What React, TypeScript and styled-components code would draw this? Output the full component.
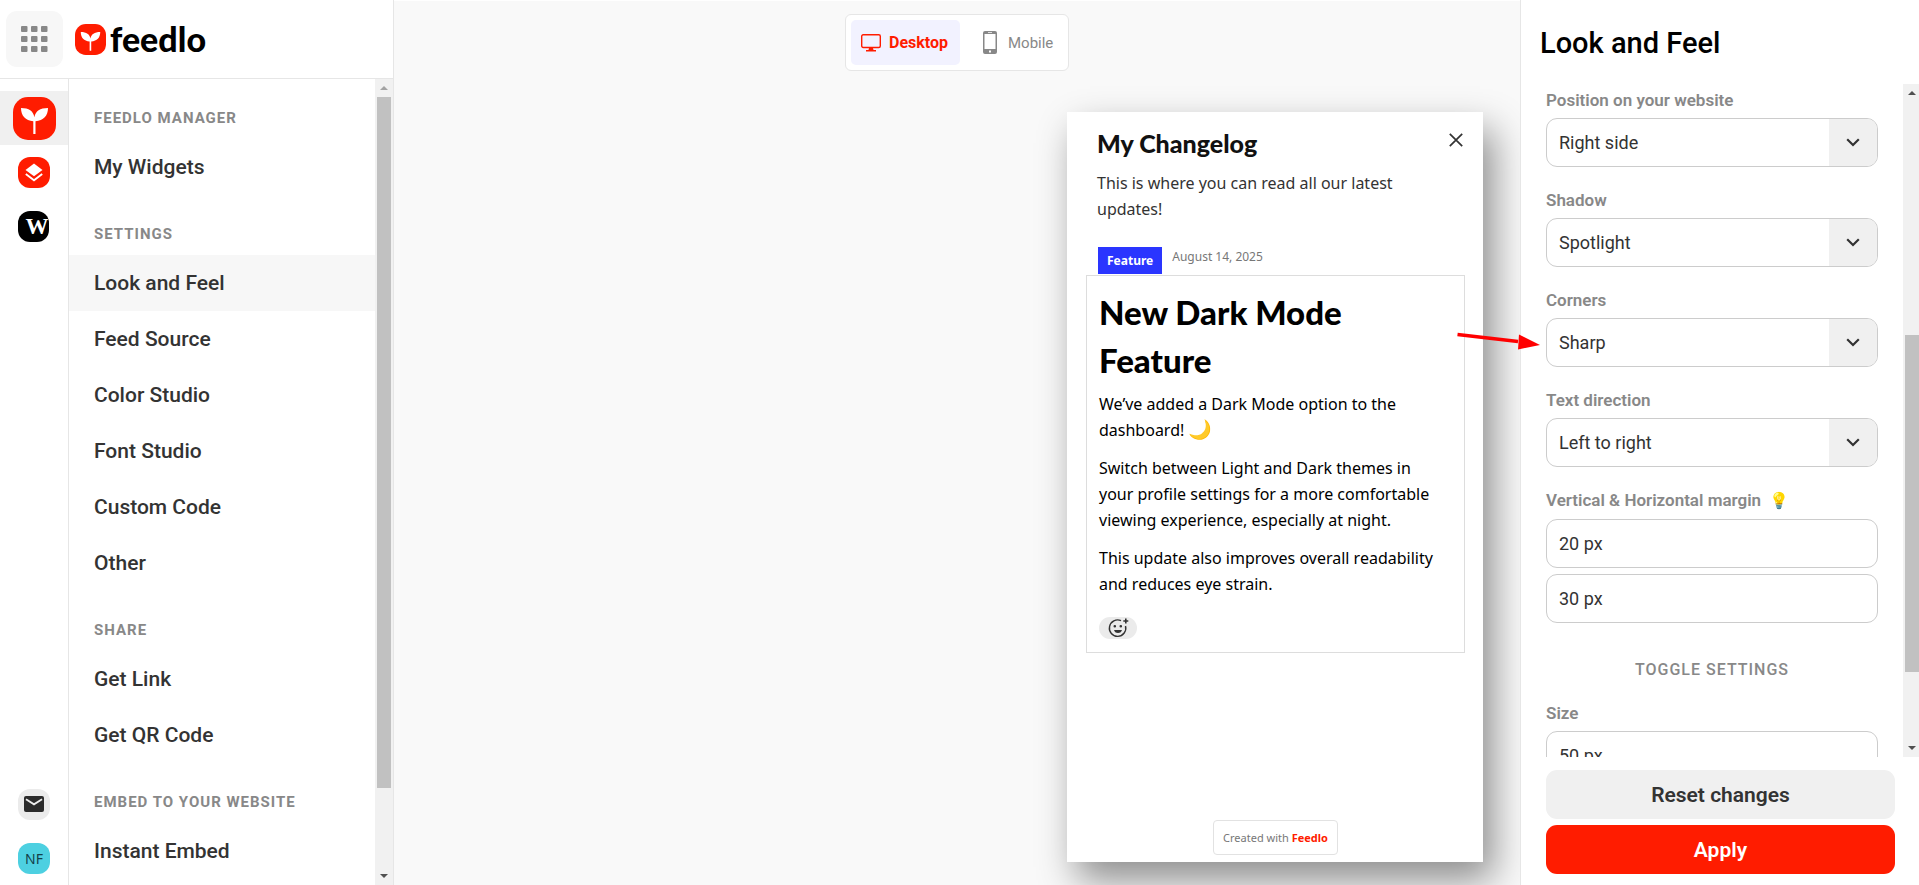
import React from "react";
import styled, { createGlobalStyle, css } from "styled-components";

const UI = `Roboto, "Liberation Sans", sans-serif`;
const FEED = `"Noto Sans", "Liberation Sans", sans-serif`;
const DISPLAY = `Lato, "Noto Sans", sans-serif`;
const RED = "#ff1c00";
const LINE = "#e6e6e6";

const GlobalStyle = createGlobalStyle`
  *, *::before, *::after { box-sizing: border-box; }
  body { margin: 0; background: #fff; color: #333; font-family: ${UI}; }
  h1, h2, h3, p, ul { margin: 0; padding: 0; }
  ul { list-style: none; }
  button, input, select { font-family: inherit; }
  button { cursor: pointer; }
`;

const Page = styled.div`
  position: relative;
  display: flex;
  height: 100vh;
  overflow: hidden;
`;

/* Left side */

const Sidebar = styled.aside`
  display: flex;
  flex-direction: column;
  flex: 0 0 394px;
  border-right: 1px solid ${LINE};
`;

const Brand = styled.header`
  display: flex;
  align-items: center;
  flex: 0 0 79px;
  padding: 0 6px;
  border-bottom: 1px solid ${LINE};
`;

const AppsButton = styled.button`
  display: grid;
  place-items: center;
  width: 57px;
  height: 56px;
  border: 0;
  border-radius: 11px;
  background: #f7f7f7;
`;

const Logo = styled.a`
  display: flex;
  align-items: center;
  gap: 4px;
  margin-left: 12px;
  color: #000;
  font: 900 34px/40px ${DISPLAY};
  text-decoration: none;
`;

const SidebarBody = styled.div`
  display: flex;
  flex: 1;
  min-height: 0;
`;

const Rail = styled.nav`
  display: flex;
  flex-direction: column;
  flex: 0 0 69px;
  padding-top: 12px;
  border-right: 1px solid ${LINE};
`;

const RailItem = styled.button<{ $active?: boolean; $last?: boolean }>`
  display: grid;
  place-items: center;
  height: 54px;
  padding: 0;
  border: 0;
  background: ${(p) => (p.$active ? "#f0f0f0" : "transparent")};
`;

const RailSpacer = styled.div`
  flex: 1;
`;

const Badge = styled.span<{ $bg: string }>`
  display: grid;
  place-items: center;
  width: 32px;
  height: 31px;
  overflow: hidden;
  border-radius: 12px;
  background: ${(p) => p.$bg};
  color: #14404a;
  font: 400 14px/31px ${FEED};
`;

const WordMark = styled(Badge)`
  justify-items: end;
  width: 31px;
  margin-right: 2px;
  color: #fff;
  font: 700 23px/31px "Liberation Serif", serif;
`;

const Menu = styled.nav`
  flex: 1;
  min-width: 0;
  overflow: hidden;
`;

const MenuTitle = styled.h3`
  padding: 30px 25px 12px;
  color: #888;
  font-size: 15px;
  font-weight: 700;
  line-height: 18px;
  letter-spacing: 1px;
  text-transform: uppercase;
`;

const MenuLink = styled.a<{ $active?: boolean }>`
  display: block;
  padding: 0 25px;
  background: ${(p) => (p.$active ? "#f7f7f7" : "transparent")};
  color: #333;
  font-size: 21px;
  font-weight: 500;
  line-height: 56px;
  text-decoration: none;
`;

/* Scroll bars */

const Bar = styled.div<{ $wide?: boolean }>`
  display: flex;
  flex-direction: column;
  flex: 0 0 ${(p) => (p.$wide ? 18 : 16)}px;
  padding: 0 ${(p) => (p.$wide ? 2 : 0)}px 0 2px;
  background: #f1f1f1;
`;

const BarArrow = styled.div<{ $down?: boolean; $off?: boolean }>`
  display: grid;
  flex: 0 0 18px;
  place-items: center;
  &::before {
    content: "";
    border: 4px solid transparent;
    ${(p) =>
      p.$down
        ? css`border-top-color: #505050; border-bottom: 0;`
        : css`border-bottom-color: ${p.$off ? "#a3a3a3" : "#505050"}; border-top: 0;`}
  }
`;

const BarSpace = styled.div<{ $part: number }>`
  flex: ${(p) => p.$part} 1 0;
`;

const Thumb = styled(BarSpace)`
  background: #c1c1c1;
`;

function ScrollBar(p: { before: number; thumb: number; after: number; wide?: boolean }) {
  return (
    <Bar $wide={p.wide} aria-hidden="true">
      <BarArrow $off={p.before === 0} />
      <BarSpace $part={p.before} />
      <Thumb $part={p.thumb} />
      <BarSpace $part={p.after} />
      <BarArrow $down />
    </Bar>
  );
}

/* Preview */

const Preview = styled.main`
  display: flex;
  flex-direction: column;
  flex: 1;
  min-width: 0;
  overflow: hidden;
  padding: 13px 37px 23px;
  border-top: 1px solid #fff;
  background: #f9f9f9;
`;

const DeviceSwitch = styled.div`
  display: flex;
  align-self: center;
  padding: 5px;
  border: 1px solid ${LINE};
  border-radius: 6px;
  background: #fff;
`;

const Device = styled.button<{ $on?: boolean }>`
  display: flex;
  align-items: center;
  gap: ${(p) => (p.$on ? 8 : 11)}px;
  width: ${(p) => (p.$on ? 109 : 103)}px;
  height: 45px;
  padding: 0 0 0 ${(p) => (p.$on ? 10 : 23)}px;
  border: 0;
  border-radius: 5px;
  background: ${(p) => (p.$on ? "#f2f2ff" : "transparent")};
  color: ${(p) => (p.$on ? RED : "#888")};
  font-size: ${(p) => (p.$on ? 16 : 15)}px;
  font-weight: ${(p) => (p.$on ? 700 : 400)};
`;

const Widget = styled.section`
  display: flex;
  flex-direction: column;
  flex: 1;
  align-self: flex-end;
  width: 416px;
  margin-top: 41px;
  padding: 15px 18px 7px 19px;
  background: #fff;
  box-shadow: 10px 18px 36px rgba(0, 0, 0, 0.44);
  color: #333;
  font: 400 16px/26px ${FEED};
`;

const WidgetHead = styled.div`
  display: flex;
  align-items: flex-start;
  justify-content: space-between;
  padding: 0 0 0 11px;
`;

const WidgetTitle = styled.h2`
  color: #111;
  font: 900 25px/32px ${DISPLAY};
`;

const CloseButton = styled.button`
  display: grid;
  place-items: center;
  width: 18px;
  height: 26px;
  padding: 0;
  border: 0;
  background: none;
`;

const Intro = styled.p`
  width: 330px;
  margin: 11px 0 24px 11px;
`;

const EntryMeta = styled.div`
  display: flex;
  align-items: flex-start;
  gap: 10px;
  margin: 1px 0 1px 12px;
  color: #777;
  font-size: 12px;
  line-height: 20px;
`;

const Tag = styled.span`
  padding: 0 9px;
  background: #2a35ff;
  color: #fff;
  font-weight: 700;
  line-height: 27px;
`;

const Entry = styled.article`
  padding: 12px 20px 13px 12px;
  border: 1px solid #ddd;
  color: #000;
  p {
    margin-bottom: 12px;
  }
`;

const EntryTitle = styled.h1`
  margin-bottom: 7px;
  font: 900 33px/48px ${DISPLAY};
`;

const Emoji = styled.span`
  font-size: 19px;
  line-height: 20px;
`;

const ReactButton = styled.button`
  display: grid;
  place-items: center;
  width: 38px;
  height: 22px;
  margin-top: 20px;
  padding: 0;
  border: 0;
  border-radius: 11px;
  background: #ebebeb;
`;

const Credit = styled.a`
  align-self: center;
  margin-top: auto;
  padding: 0 9px;
  border: 1px solid #e2e2e2;
  border-radius: 4px;
  color: #777;
  font-size: 11px;
  line-height: 33px;
  text-decoration: none;
  strong {
    color: ${RED};
  }
`;

/* Settings */

const Settings = styled.aside`
  display: flex;
  flex-direction: column;
  flex: 0 0 399px;
  border-left: 1px solid ${LINE};
  background: #fff;
`;

const SettingsTitle = styled.h2`
  padding: 24px 19px 22px;
  color: #000;
  font-size: 29px;
  font-weight: 500;
  line-height: 38px;
`;

const SettingsBody = styled.div`
  display: flex;
  flex: 1;
  min-height: 0;
`;

const Form = styled.form`
  flex: 1;
  padding: 6px 25px 0;
  overflow: hidden;
`;

const Field = styled.div`
  display: flex;
  flex-direction: column;
  gap: 8px;
  margin-bottom: 23px;
`;

const Stack = styled.div`
  display: grid;
  gap: 6px;
`;

const Label = styled.label`
  color: #888;
  font-size: 17px;
  font-weight: 600;
  line-height: 20px;
`;

const Hint = styled.span`
  margin-left: 8px;
  font-size: 16px;
`;

const boxStyle = css`
  width: 100%;
  height: 49px;
  padding: 0 12px;
  border: 1px solid #ccc;
  border-radius: 11px;
  background: #fff;
  color: #333;
  font-size: 18px;
`;

const TextBox = styled.input`
  ${boxStyle}
`;

const SelectWrap = styled.div`
  position: relative;
  display: flex;
`;

const Select = styled.select`
  ${boxStyle}
  appearance: none;
`;

const SelectEnd = styled.span`
  position: absolute;
  inset: 1px 1px 1px auto;
  display: grid;
  place-items: center;
  width: 48px;
  border-radius: 0 10px 10px 0;
  background: #f0f0f0;
  pointer-events: none;
`;

const ToggleHeading = styled.h3`
  margin: 37px 0 23px;
  color: #888;
  font-size: 16px;
  font-weight: 500;
  line-height: 20px;
  letter-spacing: 1px;
  text-align: center;
`;

const Actions = styled.div`
  display: flex;
  flex-direction: column;
  gap: 6px;
  padding: 13px 24px 11px 25px;
`;

const ActionButton = styled.button<{ $primary?: boolean }>`
  height: 49px;
  border: 0;
  border-radius: 11px;
  background: ${(p) => (p.$primary ? RED : "#f0f0f0")};
  color: ${(p) => (p.$primary ? "#fff" : "#333")};
  font-size: 21px;
  font-weight: 600;
`;

const Pointer = styled.svg`
  position: absolute;
  top: 331px;
  right: 379px;
`;

/* Icons */

function Sprout({ size }: { size: number }) {
  return (
    <svg width={size} height={size} viewBox="0 0 43 43" aria-hidden="true">
      <rect width="43" height="43" rx="15" fill={RED} />
      <path
        fill="#fff"
        d="M8 11c8 0 12.300 3 13.400 9.200C22.500 14 27 11 35 11c0 8-4.500 12.400-12.500 13.200V37h-2.200V24.200C12.500 23.400 8 19 8 11z"
      />
    </svg>
  );
}

function SelectField(p: { id: string; label: string; value: string }) {
  return (
    <Field>
      <Label htmlFor={p.id}>{p.label}</Label>
      <SelectWrap>
        <Select id={p.id} defaultValue={p.value}>
          <option>{p.value}</option>
        </Select>
        <SelectEnd>
          <svg width="14" height="9" viewBox="0 0 14 9" fill="none" stroke="#333" strokeWidth="2.200" aria-hidden="true">
            <path d="M1.200 1.200 7 7l5.800-5.800" />
          </svg>
        </SelectEnd>
      </SelectWrap>
    </Field>
  );
}

const MENU = [
  { title: "Feedlo Manager", items: ["My Widgets"] },
  { title: "Settings", items: ["Look and Feel", "Feed Source", "Color Studio", "Font Studio", "Custom Code", "Other"] },
  { title: "Share", items: ["Get Link", "Get QR Code"] },
  { title: "Embed to your website", items: ["Instant Embed"] },
];

const DOTS = [0, 10, 20];

export default function App() {
  return (
    <Page>
      <GlobalStyle />
      <Sidebar>
        <Brand>
          <AppsButton aria-label="Apps">
            <svg width="27" height="26" viewBox="0 0 27 26" fill="#888" aria-hidden="true">
              {DOTS.map((y) => DOTS.map((x) => <rect key={`${x}-${y}`} x={x} y={y} width="6.500" height="6" rx="1" />))}
            </svg>
          </AppsButton>
          <Logo href="#">
            <Sprout size={31} />
            feedlo
          </Logo>
        </Brand>
        <SidebarBody>
          <Rail aria-label="Products">
            <RailItem $active aria-label="Feedlo">
              <Sprout size={43} />
            </RailItem>
            <RailItem aria-label="Layers">
              <Badge $bg={RED}>
                <svg width="20" height="19" viewBox="0 0 20 19" aria-hidden="true">
                  <path d="M10 0.500 18.500 7 10 13.300 1.500 7z" fill="#fff" />
                  <path d="M1.800 11 10 17.200 18.200 11" fill="none" stroke="#fff" strokeWidth="1.900" />
                </svg>
              </Badge>
            </RailItem>
            <RailItem aria-label="WordPress">
              <WordMark $bg="#000">W</WordMark>
            </RailItem>
            <RailSpacer />
            <RailItem aria-label="Messages">
              <Badge $bg="#ebebeb">
                <svg width="20" height="16" viewBox="0 0 20 16" aria-hidden="true">
                  <rect width="20" height="16" rx="2" fill="#2b2b2b" />
                  <path d="M2 3.200 10 8.300l8-5.100" fill="none" stroke="#ebebeb" strokeWidth="1.900" />
                </svg>
              </Badge>
            </RailItem>
            <RailItem aria-label="Account">
              <Badge $bg="#4dd0e1">NF</Badge>
            </RailItem>
          </Rail>
          <Menu aria-label="Sections">
            {MENU.map((group) => (
              <section key={group.title}>
                <MenuTitle>{group.title}</MenuTitle>
                <ul>
                  {group.items.map((item) => (
                    <li key={item}>
                      <MenuLink href="#" $active={item === "Look and Feel"}>
                        {item}
                      </MenuLink>
                    </li>
                  ))}
                </ul>
              </section>
            ))}
          </Menu>
          <ScrollBar wide before={0} thumb={691} after={79} />
        </SidebarBody>
      </Sidebar>

      <Preview>
        <DeviceSwitch>
          <Device $on>
            <svg width="20" height="18" viewBox="0 0 20 18" aria-hidden="true">
              <rect x="0.700" y="0.700" width="18.600" height="12.800" rx="1.500" fill="none" stroke={RED} strokeWidth="1.400" />
              <path d="M8 14h4l.5 2H15v1.500H5V16h2.500z" fill={RED} />
            </svg>
            Desktop
          </Device>
          <Device>
            <svg width="14" height="23" viewBox="0 0 14 23" aria-hidden="true">
              <path
                fill="#888"
                fillRule="evenodd"
                d="M2 0h10a2 2 0 0 1 2 2v19a2 2 0 0 1-2 2H2a2 2 0 0 1-2-2V2a2 2 0 0 1 2-2zm-.5 3v15h11V3zM5 1.200v.7h4v-.7zm1 18.200v2h2v-2z"
              />
            </svg>
            Mobile
          </Device>
        </DeviceSwitch>

        <Widget>
          <WidgetHead>
            <WidgetTitle>My Changelog</WidgetTitle>
            <CloseButton aria-label="Close">
              <svg width="14" height="14" viewBox="0 0 14 14" fill="none" stroke="#333" strokeWidth="1.700" aria-hidden="true">
                <path d="M.8.8l12.400 12.400M13.200.8.8 13.200" />
              </svg>
            </CloseButton>
          </WidgetHead>
          <Intro>This is where you can read all our latest updates!</Intro>
          <EntryMeta>
            <Tag>Feature</Tag>
            <time dateTime="2025-08-14">August 14, 2025</time>
          </EntryMeta>
          <Entry>
            <EntryTitle>
              New Dark Mode
              <br />
              Feature
            </EntryTitle>
            <p>
              We’ve added a Dark Mode option to the
              <br />
              dashboard! <Emoji>🌙</Emoji>
            </p>
            <p>Switch between Light and Dark themes in your profile settings for a more comfortable viewing experience, especially at night.</p>
            <p>This update also improves overall readability and reduces eye strain.</p>
            <ReactButton aria-label="Add reaction">
              <svg width="21" height="20" viewBox="0 0 21 20" fill="none" stroke="#333" strokeWidth="1.400" aria-hidden="true">
                <path d="M13 2.700A8.200 8.200 0 1 0 17.500 8" />
                <path d="M17.800.5v5M15.300 3h5" strokeWidth="1.600" />
                <circle cx="6.800" cy="8.300" r=".6" fill="#333" />
                <circle cx="12.800" cy="8.300" r=".6" fill="#333" />
                <path d="M6 12h8c-.8 2.400-2.300 3-4 3s-3.200-.6-4-3z" fill="#333" stroke="none" />
              </svg>
            </ReactButton>
          </Entry>
          <Credit href="#">
            Created with <strong>Feedlo</strong>
          </Credit>
        </Widget>
      </Preview>

      <Settings>
        <SettingsTitle>Look and Feel</SettingsTitle>
        <SettingsBody>
          <Form>
            <SelectField id="position" label="Position on your website" value="Right side" />
            <SelectField id="shadow" label="Shadow" value="Spotlight" />
            <SelectField id="corners" label="Corners" value="Sharp" />
            <SelectField id="direction" label="Text direction" value="Left to right" />
            <Field>
              <Label htmlFor="vertical">
                Vertical &amp; Horizontal margin<Hint>💡</Hint>
              </Label>
              <Stack>
                <TextBox id="vertical" defaultValue="20 px" />
                <TextBox id="horizontal" aria-label="Horizontal margin" defaultValue="30 px" />
              </Stack>
            </Field>
            <ToggleHeading>TOGGLE SETTINGS</ToggleHeading>
            <Field>
              <Label htmlFor="size">Size</Label>
              <TextBox id="size" defaultValue="50 px" />
            </Field>
          </Form>
          <ScrollBar before={233} thumb={337} after={67} />
        </SettingsBody>
        <Actions>
          <ActionButton>Reset changes</ActionButton>
          <ActionButton $primary>Apply</ActionButton>
        </Actions>
      </Settings>

      <Pointer width="86" height="22" viewBox="0 0 86 22" aria-hidden="true">
        <path d="M3.500 3.500 64 10.500" stroke="#f00" strokeWidth="3.500" />
        <path d="M65 3.500 86 14 64 18.500z" fill="#f00" />
      </Pointer>
    </Page>
  );
}
